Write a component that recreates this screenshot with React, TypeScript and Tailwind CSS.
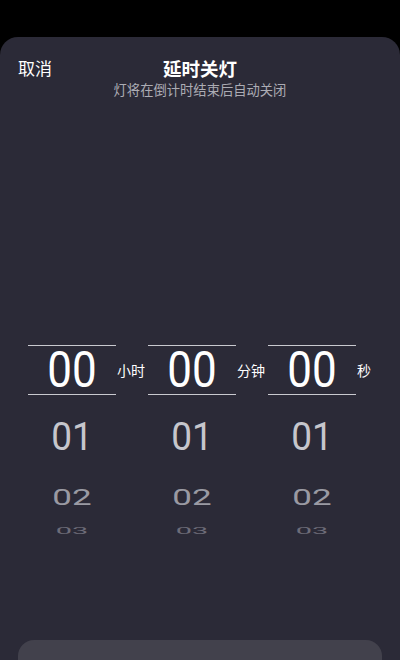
import React from "react";

const cjk = { fontFamily: '"Noto Sans CJK SC", "Noto Sans", sans-serif' };
const num = { fontFamily: 'Roboto, "Liberation Sans", sans-serif' };

const columns = [
  { unit: "小时" },
  { unit: "分钟" },
  { unit: "秒" },
];

function Wheel() {
  return (
    <div className="flex w-[88px] flex-col items-center" style={num}>
      <div className="flex h-[50px] w-full items-center justify-center border-y border-[#c9c9cf]">
        <span className="inline-block scale-y-[1.12] text-[44px] leading-none text-white">00</span>
      </div>
      <div className="flex h-[83px] items-center justify-center">
        <span className="inline-block scale-y-[1.05] text-[37px] leading-none text-[#c6c6cc]">01</span>
      </div>
      <div className="flex h-[38px] items-center justify-center">
        <span className="inline-block scale-y-[0.62] text-[35px] leading-none text-[#9a9aa3]">02</span>
      </div>
      <div className="flex h-[30px] items-center justify-center">
        <span className="inline-block scale-y-[0.3] text-[29px] leading-none text-[#6d6c78]">03</span>
      </div>
    </div>
  );
}

export default function App() {
  return (
    <div className="h-[660px] w-[400px] overflow-hidden bg-black pt-[37px]">
      <div className="flex h-full flex-col rounded-t-[18px] bg-[#2b2a37] pt-[19px]" style={cjk}>
        <div className="grid grid-cols-[1fr_auto_1fr]">
          <div className="pl-[18px] text-[17px] leading-[24px] text-white">取消</div>
          <div className="flex flex-col items-center">
            <span className="text-[18.5px] leading-[24px] font-bold text-white">延时关灯</span>
            <span className="text-[13.3px] leading-[19px] text-[#acacb4]">灯将在倒计时结束后自动关闭</span>
          </div>
          <div />
        </div>

        <div className="mt-[246px] flex pl-[28px]">
          {columns.map((c) => (
            <div key={c.unit} className="flex">
              <Wheel />
              <div className="flex h-[50px] w-[32px] items-center pl-[1px] text-[14px] text-white">
                {c.unit}
              </div>
            </div>
          ))}
        </div>

        <div className="mx-[18px] mt-[94px] h-[56px] shrink-0 rounded-[16px] bg-[#42414c]" />
      </div>
    </div>
  );
}
